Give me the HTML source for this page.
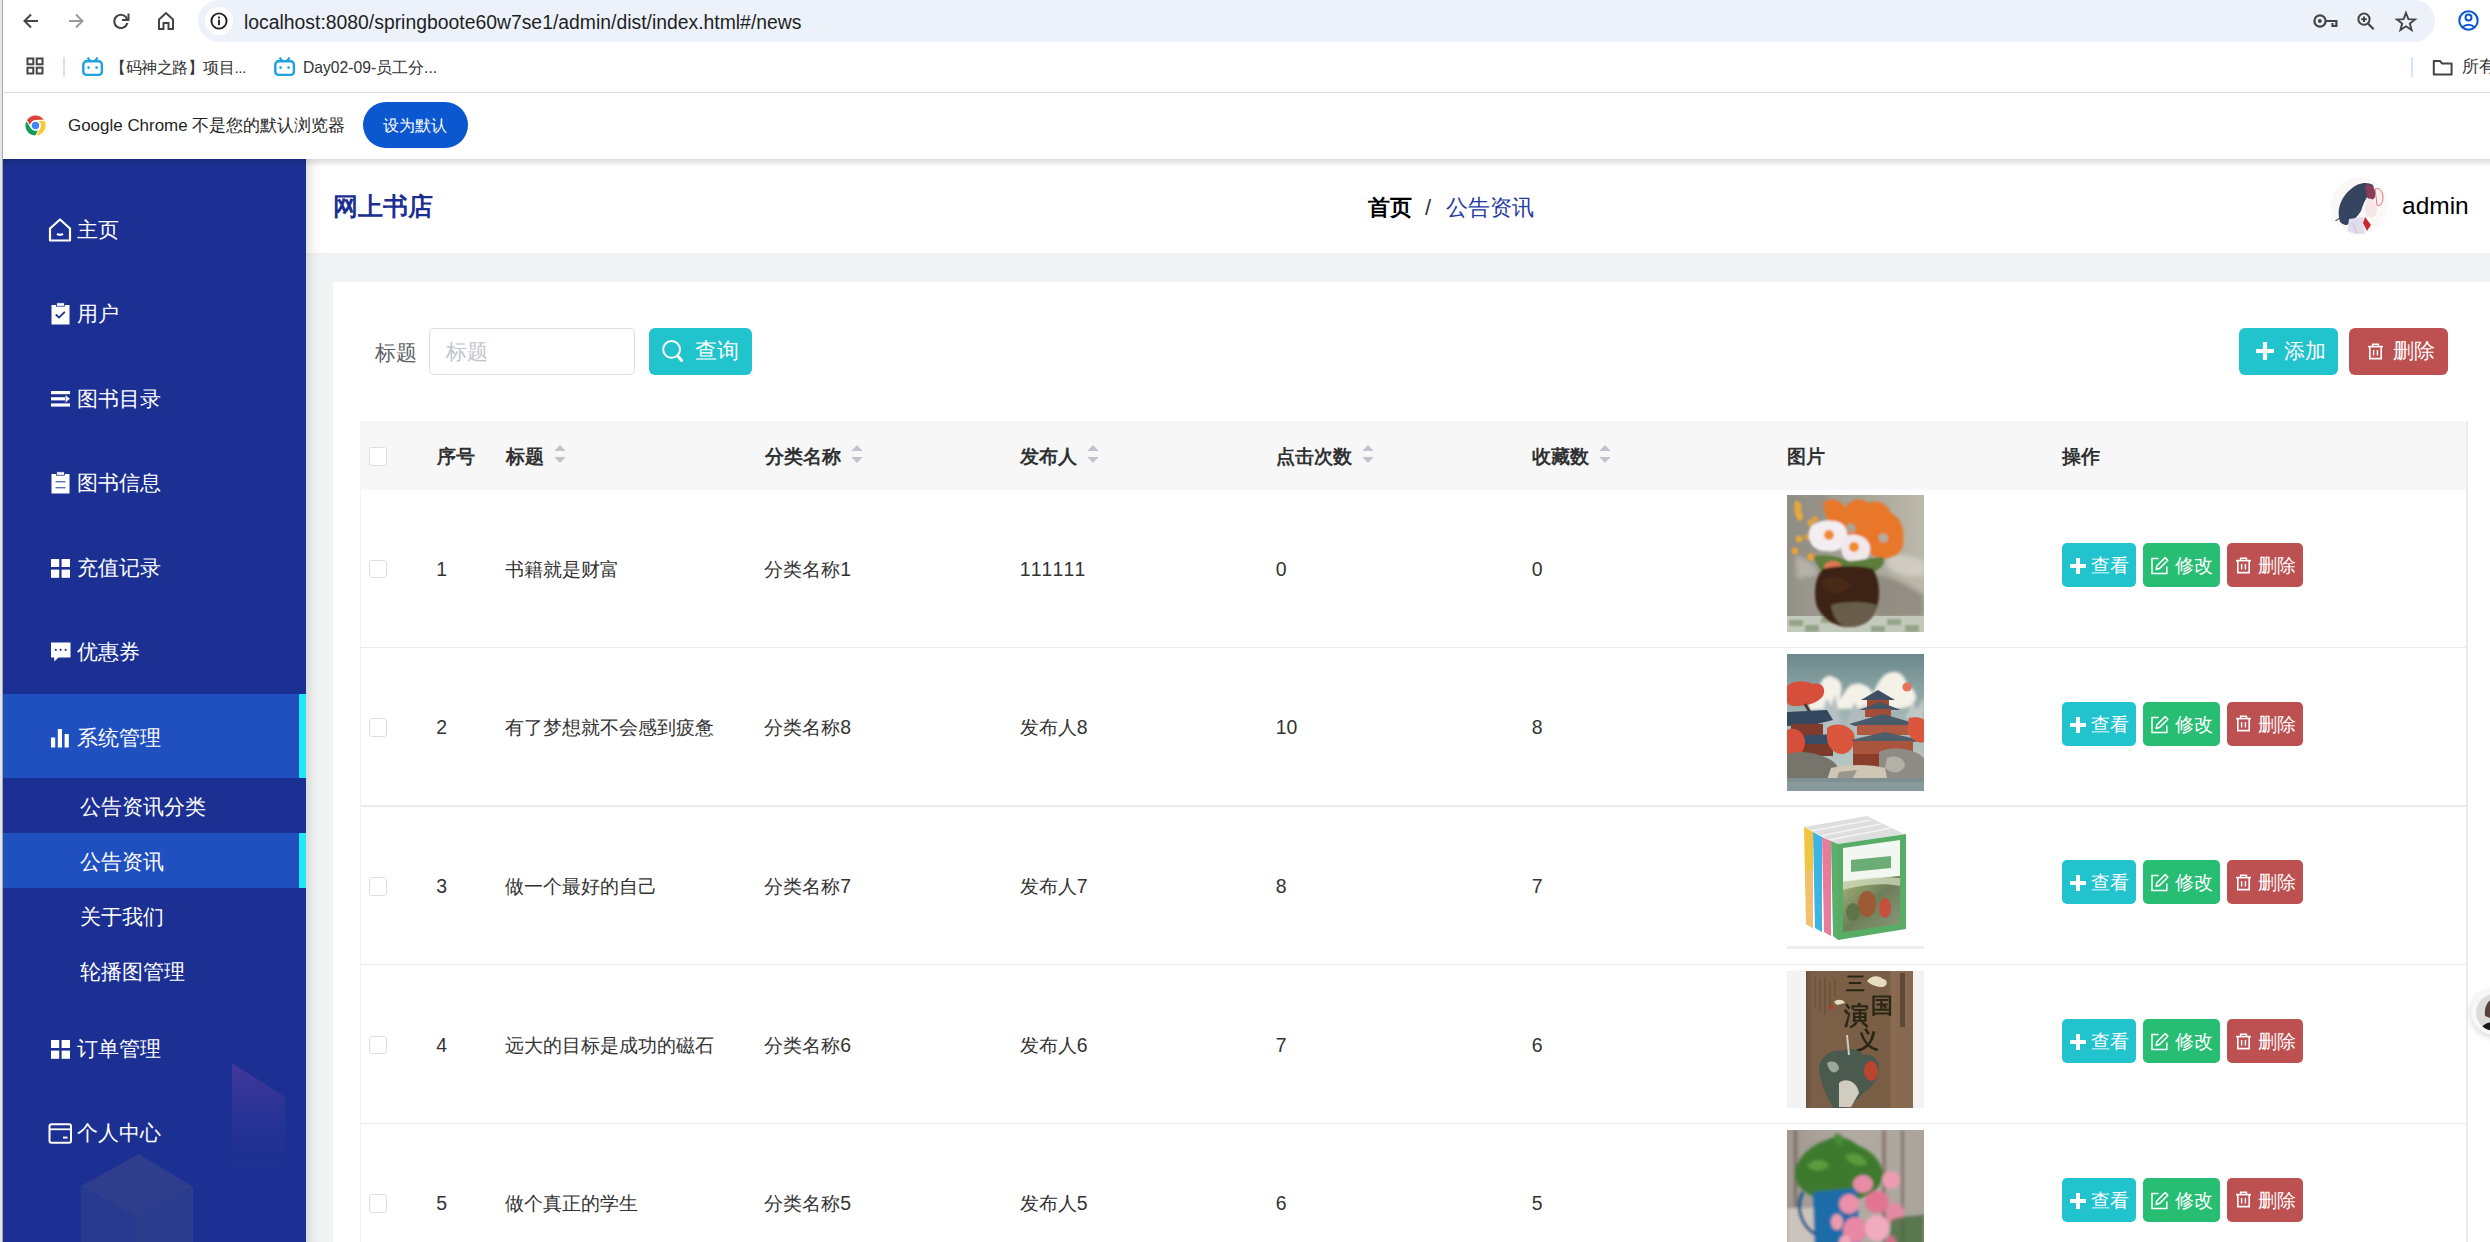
<!DOCTYPE html>
<html><head><meta charset="utf-8"><title>网上书店</title>
<style>
*{margin:0;padding:0;box-sizing:border-box}
html,body{width:2490px;height:1242px;overflow:hidden;background:#fff;font-family:"Liberation Sans",sans-serif}
.t{position:absolute;white-space:nowrap;line-height:1}
#chrome{position:absolute;left:0;top:0;width:2490px;height:159px;background:#fff}
#sidebar{position:absolute;left:3px;top:159px;width:303px;height:1083px;background:#1b3092;overflow:hidden}
#header{position:absolute;left:306px;top:159px;width:2184px;height:94px;background:#fff}
#content{position:absolute;left:306px;top:253px;width:2184px;height:989px;background:#f1f4f5}
.btn{position:absolute;height:44px;border-radius:5px}
.img{position:absolute;width:137px;height:137px;overflow:hidden}
#card{position:absolute;left:27px;top:29px;width:2157px;height:960px;background:#fff}
</style></head><body>
<div id="chrome">
<div style="position:absolute;left:0;top:0;width:2px;height:1242px;background:#e6e6e6"></div>
<div style="position:absolute;left:2px;top:0;width:1px;height:1242px;background:#a8a8a8"></div>
<svg style="position:absolute;left:20px;top:10px" width="22" height="22" viewBox="0 0 22 22"><path d="M18 11H5M11 4.5L4.5 11L11 17.5" stroke="#444" stroke-width="2" fill="none"/></svg>
<svg style="position:absolute;left:65px;top:10px" width="22" height="22" viewBox="0 0 22 22"><path d="M4 11H17M11 4.5L17.5 11L11 17.5" stroke="#9a9a9a" stroke-width="2" fill="none"/></svg>
<svg style="position:absolute;left:110px;top:10px" width="22" height="22" viewBox="0 0 22 22"><path d="M17.2 9.5A6.6 6.6 0 1 0 17.3 13" stroke="#444" stroke-width="2" fill="none"/><path d="M18.5 3.5V10H12" stroke="#444" stroke-width="2" fill="none"/></svg>
<svg style="position:absolute;left:155px;top:10px" width="22" height="22" viewBox="0 0 22 22"><path d="M4 19V9.5L11 3L18 9.5V19H13.5V13H8.5V19Z" stroke="#444" stroke-width="2" fill="none" stroke-linejoin="miter"/></svg>
<div style="position:absolute;left:198px;top:0;width:2237px;height:42px;border-radius:21px;background:#edf2fa"></div>
<div style="position:absolute;left:205px;top:7px;width:28px;height:28px;border-radius:50%;background:#fff"></div>
<svg style="position:absolute;left:209px;top:11px" width="20" height="20" viewBox="0 0 20 20"><circle cx="10" cy="10" r="7.6" stroke="#222" stroke-width="1.9" fill="none"/><rect x="9.05" y="8.6" width="1.9" height="5.6" fill="#222"/><rect x="9.05" y="5.6" width="1.9" height="1.9" fill="#222"/></svg>
<div class="t" style="left:244px;top:12.81px;font-size:19.38px;color:#1f1f1f;font-weight:normal;letter-spacing:0px">localhost:8080/springboote60w7se1/admin/dist/index.html#/news</div>
<svg style="position:absolute;left:2312px;top:12px" width="28" height="18" viewBox="0 0 28 18"><circle cx="8" cy="9" r="5.6" stroke="#444" stroke-width="2.2" fill="none"/><circle cx="7.8" cy="9" r="2" fill="#444"/><path d="M13.6 9H24.4V14H20.5V11" stroke="#444" stroke-width="2.2" fill="none"/></svg>
<svg style="position:absolute;left:2355px;top:11px" width="22" height="22" viewBox="0 0 22 22"><circle cx="9" cy="8.2" r="5.6" stroke="#444" stroke-width="2" fill="none"/><path d="M13 12.4L18.6 18.2" stroke="#444" stroke-width="2.2"/><path d="M9 5.4V11M6.2 8.2H11.8" stroke="#444" stroke-width="2"/></svg>
<svg style="position:absolute;left:2394px;top:10px" width="24" height="22" viewBox="0 0 24 22"><path d="M12 3L14.4 9.2L21 9.5L15.8 13.6L17.6 20L12 16.3L6.4 20L8.2 13.6L3 9.5L9.6 9.2Z" stroke="#444" stroke-width="1.9" fill="none" stroke-linejoin="miter"/></svg>
<svg style="position:absolute;left:2456px;top:8px" width="25" height="25" viewBox="0 0 25 25"><circle cx="12.5" cy="12.5" r="9.2" stroke="#0b57d0" stroke-width="2.1" fill="none"/><circle cx="12.5" cy="9.6" r="3" stroke="#0b57d0" stroke-width="2" fill="none"/><path d="M6.2 19.2Q12.5 14.4 18.8 19.2" stroke="#0b57d0" stroke-width="2" fill="none"/></svg>
<svg style="position:absolute;left:26px;top:57px" width="20" height="20" viewBox="0 0 20 20"><g stroke="#444" stroke-width="2" fill="none"><rect x="1.5" y="1.5" width="5.8" height="5.8"/><rect x="10.7" y="1.5" width="5.8" height="5.8"/><rect x="1.5" y="10.7" width="5.8" height="5.8"/><rect x="10.7" y="10.7" width="5.8" height="5.8"/></g></svg>
<div style="position:absolute;left:63px;top:57px;width:2px;height:20px;background:#d3e3fd;border-radius:1px"></div>
<svg style="position:absolute;left:82px;top:57px" width="22" height="20" viewBox="0 0 22 20"><rect x="1.3" y="4.3" width="18.6" height="13.6" rx="3.2" stroke="#1da1e0" stroke-width="2.4" fill="none"/><path d="M5.6 0.6L8.2 4M15.6 0.6L13 4" stroke="#1da1e0" stroke-width="2.2"/><circle cx="6.6" cy="10.6" r="1.3" fill="#1da1e0"/><circle cx="14.6" cy="10.6" r="1.3" fill="#1da1e0"/></svg>
<div class="t" style="left:110px;top:60.25px;font-size:15.5px;color:#333;font-weight:normal;letter-spacing:-0.45px">【码神之路】项目...</div>
<svg style="position:absolute;left:274px;top:57px" width="22" height="20" viewBox="0 0 22 20"><rect x="1.3" y="4.3" width="18.6" height="13.6" rx="3.2" stroke="#1da1e0" stroke-width="2.4" fill="none"/><path d="M5.6 0.6L8.2 4M15.6 0.6L13 4" stroke="#1da1e0" stroke-width="2.2"/><circle cx="6.6" cy="10.6" r="1.3" fill="#1da1e0"/><circle cx="14.6" cy="10.6" r="1.3" fill="#1da1e0"/></svg>
<div class="t" style="left:303px;top:60.17px;font-size:15.66px;color:#333;font-weight:normal;">Day02-09-员工分...</div>
<div style="position:absolute;left:2411px;top:57px;width:2px;height:20px;background:#d3e3fd;border-radius:1px"></div>
<svg style="position:absolute;left:2432px;top:59px" width="23" height="18" viewBox="0 0 23 18"><path d="M1.8 2V15.6H19.6V4.6H10.2L8 2Z" stroke="#444" stroke-width="2" fill="none" stroke-linejoin="round"/></svg>
<div class="t" style="left:2462px;top:59.20px;font-size:16.6px;color:#333;font-weight:normal;">所有</div>
<div style="position:absolute;left:3px;top:92px;width:2487px;height:1px;background:#dadce0"></div>
<svg style="position:absolute;left:24px;top:114px" width="23" height="23" viewBox="-11.5 -11.5 23 23">
<g stroke="#fff" stroke-width="0.9" stroke-linejoin="round">
<path d="M9.093,-5.250 A10.5 10.5 0 0 0 -9.093,-5.250 L-4.330,2.500 A5.0 5.0 0 0 1 0,-5.000 Z" fill="#db4437"/>
<path d="M9.093,-5.250 A10.5 10.5 0 0 0 -9.093,-5.250 L-4.330,2.500 A5.0 5.0 0 0 1 0,-5.000 Z" fill="#fcc934" transform="rotate(120)"/>
<path d="M9.093,-5.250 A10.5 10.5 0 0 0 -9.093,-5.250 L-4.330,2.500 A5.0 5.0 0 0 1 0,-5.000 Z" fill="#0f9d58" transform="rotate(240)"/>
</g>
<circle r="3.7" fill="#4285f4"/></svg>
<div class="t" style="left:68px;top:118.02px;font-size:16.97px;color:#1f1f1f;font-weight:normal;">Google Chrome 不是您的默认浏览器</div>
<div style="position:absolute;left:363px;top:102px;width:105px;height:46px;border-radius:23px;background:#0b57d0"></div>
<div class="t" style="left:383px;top:116.90px;font-size:16.2px;color:#fff;font-weight:normal;">设为默认</div>
</div>
<div id="sidebar">
<svg style="position:absolute;left:0;top:0" width="303" height="1083" viewBox="0 0 303 1083">
<defs><linearGradient id="pg" x1="0" y1="0" x2="0" y2="1"><stop offset="0" stop-color="#4a3a9c" stop-opacity="0.85"/><stop offset="1" stop-color="#1b3092" stop-opacity="0"/></linearGradient></defs>
<path d="M229 904L282 938V1031L229 1015Z" fill="url(#pg)"/>
<path d="M136 995L190 1028L132 1058L78 1027Z" fill="#2e3e8d"/>
<path d="M78 1027L132 1058V1083H78Z" fill="#283a8f"/>
<path d="M132 1058L190 1028V1083H132Z" fill="#2c3d8e"/>
</svg>
<div style="position:absolute;left:0;top:535px;width:303px;height:84px;background:#2050c0"></div>
<div style="position:absolute;left:296px;top:535px;width:7px;height:84px;background:#1eeaf6"></div>
<div style="position:absolute;left:0;top:674px;width:303px;height:55px;background:#2050c0"></div>
<div style="position:absolute;left:296px;top:674px;width:7px;height:55px;background:#1eeaf6"></div>
<div style="position:absolute;left:44px;top:57.5px;width:26px;height:26px"><svg width="26" height="26" viewBox="0 0 26 26"><path d="M3 11.5L13 2.5L23 11.5V23.5H3Z" stroke="#fff" stroke-width="2.2" fill="none" stroke-linejoin="round"/><path d="M10 16.8Q13 18.8 16 16.8" stroke="#fff" stroke-width="2" fill="none"/></svg></div>
<div class="t" style="left:74.3px;top:60.85px;font-size:20.5px;color:#fff;font-weight:normal;">主页</div>
<div style="position:absolute;left:44px;top:141.5px;width:26px;height:26px"><svg width="26" height="26" viewBox="0 0 26 26"><rect x="4.5" y="4" width="18" height="19.5" fill="#fff"/><rect x="9.5" y="1.8" width="8" height="3.4" fill="#fff" stroke="#1b3092" stroke-width="0.8"/><path d="M8.8 13.5L12 16.6L17.8 10.8" stroke="#1b3092" stroke-width="1.8" fill="none"/></svg></div>
<div class="t" style="left:74.3px;top:144.85px;font-size:20.5px;color:#fff;font-weight:normal;">用户</div>
<div style="position:absolute;left:44px;top:226.5px;width:26px;height:26px"><svg width="26" height="26" viewBox="0 0 26 26"><rect x="4" y="5" width="19" height="3.2" fill="#fff"/><rect x="4" y="11.2" width="14" height="3.2" fill="#fff"/><path d="M18.5 9.2L23 12.8L18.5 16.4Z" fill="#fff"/><rect x="4" y="17.4" width="19" height="3.2" fill="#fff"/></svg></div>
<div class="t" style="left:74.3px;top:229.85px;font-size:20.5px;color:#fff;font-weight:normal;">图书目录</div>
<div style="position:absolute;left:44px;top:310.5px;width:26px;height:26px"><svg width="26" height="26" viewBox="0 0 26 26"><rect x="4.5" y="4" width="18" height="19.5" fill="#fff"/><rect x="9.5" y="1.8" width="8" height="3.4" fill="#fff" stroke="#1b3092" stroke-width="0.8"/><rect x="8.5" y="11" width="10" height="1.4" fill="#5b6fb8"/><rect x="8.5" y="17" width="10" height="1.4" fill="#5b6fb8"/></svg></div>
<div class="t" style="left:74.3px;top:313.85px;font-size:20.5px;color:#fff;font-weight:normal;">图书信息</div>
<div style="position:absolute;left:44px;top:395.5px;width:26px;height:26px"><svg width="26" height="26" viewBox="0 0 26 26"><rect x="4" y="4" width="8.2" height="8" fill="#fff"/><rect x="14.6" y="4" width="8.4" height="8" fill="#fff"/><rect x="4" y="14.6" width="8.2" height="8.2" fill="#fff"/><rect x="14.6" y="14.6" width="8.4" height="8.2" fill="#fff"/></svg></div>
<div class="t" style="left:74.3px;top:398.85px;font-size:20.5px;color:#fff;font-weight:normal;">充值记录</div>
<div style="position:absolute;left:44px;top:480.0px;width:26px;height:26px"><svg width="26" height="26" viewBox="0 0 26 26"><path d="M4 3.5H23.5V18.5H11.5L7.2 22.6V18.5H4Z" fill="#fff"/><circle cx="8.8" cy="10.8" r="1.1" fill="#1b3092"/><circle cx="13.7" cy="10.8" r="1.1" fill="#1b3092"/><circle cx="18.6" cy="10.8" r="1.1" fill="#1b3092"/></svg></div>
<div class="t" style="left:74.3px;top:483.35px;font-size:20.5px;color:#fff;font-weight:normal;">优惠券</div>
<div style="position:absolute;left:44px;top:565.5px;width:26px;height:26px"><svg width="26" height="26" viewBox="0 0 26 26"><rect x="4" y="12.5" width="4.2" height="10" fill="#fff"/><rect x="10.8" y="4" width="4.2" height="18.5" fill="#fff"/><rect x="17.6" y="9" width="4.2" height="13.5" fill="#fff"/></svg></div>
<div class="t" style="left:74.3px;top:568.85px;font-size:20.5px;color:#fff;font-weight:normal;">系统管理</div>
<div style="position:absolute;left:44px;top:876.5px;width:26px;height:26px"><svg width="26" height="26" viewBox="0 0 26 26"><rect x="4" y="4" width="8.2" height="8" fill="#fff"/><rect x="14.6" y="4" width="8.4" height="8" fill="#fff"/><rect x="4" y="14.6" width="8.2" height="8.2" fill="#fff"/><rect x="14.6" y="14.6" width="8.4" height="8.2" fill="#fff"/></svg></div>
<div class="t" style="left:74.3px;top:879.85px;font-size:20.5px;color:#fff;font-weight:normal;">订单管理</div>
<div style="position:absolute;left:44px;top:961.0px;width:26px;height:26px"><svg width="26" height="26" viewBox="0 0 26 26"><rect x="2.5" y="4.2" width="21.5" height="18.6" rx="2" stroke="#fff" stroke-width="2" fill="none"/><path d="M3 9.3H23.5" stroke="#fff" stroke-width="1.8"/><path d="M16 17.6H20.5" stroke="#fff" stroke-width="2"/></svg></div>
<div class="t" style="left:74.3px;top:964.35px;font-size:20.5px;color:#fff;font-weight:normal;">个人中心</div>
<div class="t" style="left:76.8px;top:637.95px;font-size:20.5px;color:#fff;font-weight:normal;">公告资讯分类</div>
<div class="t" style="left:76.8px;top:692.95px;font-size:20.5px;color:#fff;font-weight:normal;">公告资讯</div>
<div class="t" style="left:76.8px;top:747.95px;font-size:20.5px;color:#fff;font-weight:normal;">关于我们</div>
<div class="t" style="left:76.8px;top:802.95px;font-size:20.5px;color:#fff;font-weight:normal;">轮播图管理</div>
</div>
<div id="header">
<div class="t" style="left:27px;top:35.75px;font-size:24.5px;color:#1b2f93;font-weight:bold;">网上书店</div>
<div class="t" style="left:1062px;top:38.00px;font-size:22px;color:#000;font-weight:bold;">首页</div>
<div class="t" style="left:1119px;top:38.00px;font-size:22px;color:#333;font-weight:normal;">/</div>
<div class="t" style="left:1140px;top:38.00px;font-size:22px;color:#253a9f;font-weight:normal;">公告资讯</div>
<div style="position:absolute;left:2025px;top:18px;width:57px;height:57px;border-radius:50%;overflow:hidden;background:#fdf8f8">
<svg width="57" height="57" viewBox="0 0 57 57"><defs><filter id="avb"><feGaussianBlur stdDeviation="0.6"/></filter></defs>
<g filter="url(#avb)">
<path d="M8 40C6 30 12 18 20 12C26 6 36 4 42 8C44 12 40 14 38 18C34 22 32 28 30 34C26 40 22 44 16 48C12 48 8 46 8 40Z" fill="#34445f"/>
<path d="M14 30C12 36 10 42 4 44" stroke="#3c4660" stroke-width="1.2" fill="none"/>
<path d="M34 8C40 6 46 12 44 20C42 24 38 24 36 20Z" fill="#8a3a58"/>
<path d="M36 22C40 20 46 24 46 32C46 38 42 42 38 40C34 38 32 30 36 22Z" fill="#f6e6e6"/>
<path d="M44 12C48 10 52 14 52 20C52 28 48 30 46 28Z" fill="#f8eeee" stroke="#d05a6a" stroke-width="0.8"/>
<path d="M18 42L32 40L34 57H16Z" fill="#e3dcec"/>
<path d="M34 40L40 48L36 54L32 46Z" fill="#c62a30"/>
<path d="M22 46L26 57" stroke="#c8c0d8" stroke-width="1"/>
</g>
</svg></div>
<div class="t" style="left:2096px;top:34.75px;font-size:24.5px;color:#000;font-weight:normal;">admin</div>
</div>
<div id="content">
<div id="card">
</div>
</div>
<div id="abs">
<div class="t" style="left:374.5px;top:342.70px;font-size:20.6px;color:#606266;font-weight:normal;">标题</div>
<div style="position:absolute;left:429px;top:328px;width:206px;height:47px;border:1.4px solid #dcdfe6;border-radius:5px;background:#fff"></div>
<div class="t" style="left:446px;top:341.70px;font-size:20.6px;color:#c0c4cc;font-weight:normal;">标题</div>
<div style="position:absolute;left:649px;top:328px;width:103px;height:47px;border-radius:6px;background:#21c3cc"></div>
<svg style="position:absolute;left:660px;top:338px" width="25" height="26" viewBox="0 0 25 26"><circle cx="11.6" cy="11.4" r="8.4" stroke="#fff" stroke-width="2" fill="none"/><path d="M17.4 17.6L21.6 22.4" stroke="#fff" stroke-width="3" stroke-linecap="round"/></svg>
<div class="t" style="left:695px;top:340.75px;font-size:21.5px;color:#fff;font-weight:normal;">查询</div>
<div style="position:absolute;left:2239px;top:328px;width:99px;height:47px;border-radius:6px;background:#21c3cc"></div>
<svg style="position:absolute;left:2256px;top:342px" width="18" height="18" viewBox="0 0 18 18"><path d="M9 0V18M0 9H18" stroke="#fff" stroke-width="4.2"/></svg>
<div class="t" style="left:2283.5px;top:340.70px;font-size:20.6px;color:#fff;font-weight:normal;">添加</div>
<div style="position:absolute;left:2349px;top:328px;width:99px;height:47px;border-radius:6px;background:#bd5152"></div>
<svg style="position:absolute;left:2366.5px;top:342.5px" width="17" height="17" viewBox="0 0 17 17"><path d="M1 3.6H16" stroke="#fff" stroke-width="1.6"/><path d="M5.6 3.4V1.2H11.4V3.4" stroke="#fff" stroke-width="1.5" fill="none"/><path d="M2.8 4V15.6H14.2V4" stroke="#fff" stroke-width="1.6" fill="none"/><path d="M6.6 7V12.6M10.4 7V12.6" stroke="#fff" stroke-width="1.4"/></svg>
<div class="t" style="left:2393px;top:340.70px;font-size:20.6px;color:#fff;font-weight:normal;">删除</div>
<div style="position:absolute;left:360px;top:421px;width:2106px;height:69px;background:#f7f7f7"></div>
<div style="position:absolute;left:2466px;top:421px;width:2px;height:821px;background:#e7ebf4"></div>
<div style="position:absolute;left:360px;top:490px;width:1px;height:752px;background:#f3f3f3"></div>
<div style="position:absolute;left:368.5px;top:447.00px;width:18.5px;height:18.5px;border:1.3px solid #dcdfe6;border-radius:3px;background:#fff"></div>
<div class="t" style="left:437px;top:446.90px;font-size:19.2px;color:#303133;font-weight:bold;">序号</div>
<div class="t" style="left:505.5px;top:446.90px;font-size:19.2px;color:#303133;font-weight:bold;">标题</div>
<svg style="position:absolute;left:554.3px;top:445px" width="12" height="18" viewBox="0 0 12 18"><path d="M6 0L11.8 6H0.2Z M6 18L11.8 12H0.2Z" fill="#c0c4cc"/></svg>
<div class="t" style="left:764.5px;top:446.90px;font-size:19.2px;color:#303133;font-weight:bold;">分类名称</div>
<svg style="position:absolute;left:851px;top:445px" width="12" height="18" viewBox="0 0 12 18"><path d="M6 0L11.8 6H0.2Z M6 18L11.8 12H0.2Z" fill="#c0c4cc"/></svg>
<div class="t" style="left:1020px;top:446.90px;font-size:19.2px;color:#303133;font-weight:bold;">发布人</div>
<svg style="position:absolute;left:1087px;top:445px" width="12" height="18" viewBox="0 0 12 18"><path d="M6 0L11.8 6H0.2Z M6 18L11.8 12H0.2Z" fill="#c0c4cc"/></svg>
<div class="t" style="left:1276px;top:446.90px;font-size:19.2px;color:#303133;font-weight:bold;">点击次数</div>
<svg style="position:absolute;left:1362px;top:445px" width="12" height="18" viewBox="0 0 12 18"><path d="M6 0L11.8 6H0.2Z M6 18L11.8 12H0.2Z" fill="#c0c4cc"/></svg>
<div class="t" style="left:1532px;top:446.90px;font-size:19.2px;color:#303133;font-weight:bold;">收藏数</div>
<svg style="position:absolute;left:1599px;top:445px" width="12" height="18" viewBox="0 0 12 18"><path d="M6 0L11.8 6H0.2Z M6 18L11.8 12H0.2Z" fill="#c0c4cc"/></svg>
<div class="t" style="left:1787px;top:446.90px;font-size:19.2px;color:#303133;font-weight:bold;">图片</div>
<div class="t" style="left:2062px;top:446.90px;font-size:19.2px;color:#303133;font-weight:bold;">操作</div>
<div style="position:absolute;left:361px;top:646.67px;width:2105px;height:1.3px;background:#ebebeb"></div>
<div style="position:absolute;left:368.5px;top:559.74px;width:18.5px;height:18.5px;border:1.3px solid #dcdfe6;border-radius:3px;background:#fff"></div>
<div class="t" style="left:436.2px;top:559.51px;font-size:19.45px;color:#333;font-weight:normal;">1</div>
<div class="t" style="left:505.2px;top:559.51px;font-size:19.45px;color:#333;font-weight:normal;">书籍就是财富</div>
<div class="t" style="left:764.2px;top:559.51px;font-size:19.45px;color:#333;font-weight:normal;">分类名称1</div>
<div class="t" style="left:1019.7px;top:559.51px;font-size:19.45px;color:#333;font-weight:normal;letter-spacing:1.6px">111111</div>
<div class="t" style="left:1275.7px;top:559.51px;font-size:19.45px;color:#333;font-weight:normal;">0</div>
<div class="t" style="left:1531.7px;top:559.51px;font-size:19.45px;color:#333;font-weight:normal;">0</div>
<div class="img" style="left:1787px;top:495.00px"><svg width="137" height="137" viewBox="0 0 137 137">
<defs>
<linearGradient id="i1bg" x1="0" y1="0" x2="1" y2="0"><stop offset="0" stop-color="#94918a"/><stop offset="0.6" stop-color="#a9a69a"/><stop offset="1" stop-color="#bdb9ad"/></linearGradient>
<filter id="i1b" x="-10%" y="-10%" width="120%" height="120%"><feGaussianBlur stdDeviation="2"/></filter>
<filter id="i1c"><feGaussianBlur stdDeviation="0.9"/></filter>
</defs>
<rect width="137" height="137" fill="url(#i1bg)"/>
<g filter="url(#i1b)">
<path d="M80 80C100 78 120 90 137 100V122H90Z" fill="#8a867a" opacity="0.8"/>
<path d="M0 0H40L30 60L0 70Z" fill="#8c8a82" opacity="0.5"/>
<path d="M100 60C115 58 130 62 137 66V80C125 84 110 80 100 72Z" fill="#d8d6cc" opacity="0.7"/>
<path d="M8 60C20 64 30 70 30 80L10 84Z" fill="#cfcdc4" opacity="0.5"/>
</g>
<rect x="0" y="121" width="137" height="16" fill="#c4cabb"/>
<g fill="#8d9e80" opacity="0.85" filter="url(#i1c)"><rect x="2" y="125" width="14" height="6"/><rect x="34" y="122" width="14" height="6"/><rect x="18" y="130" width="14" height="7"/><rect x="100" y="124" width="14" height="6"/><rect x="118" y="130" width="14" height="7"/><rect x="84" y="131" width="14" height="6"/></g>
<g filter="url(#i1c)">
<path d="M36 8C42 2 52 4 58 12C64 4 74 2 82 8C90 4 100 8 104 18C112 22 118 32 116 44C118 52 112 60 104 62C96 66 86 62 80 56C72 52 62 50 56 42C46 36 38 26 36 8Z" fill="#e8772c"/>
<path d="M60 30C64 26 70 30 68 36C64 40 58 36 60 30Z" fill="#a9a59a"/><path d="M92 40C96 36 104 40 100 46C96 50 90 46 92 40Z" fill="#b2ae9f"/>
<path d="M8 6C12 4 16 10 14 16C18 22 16 26 12 26C8 22 6 14 8 6Z" fill="#e6a73c"/>
<circle cx="24" cy="28" r="3.6" fill="#e3a43e"/><circle cx="12" cy="44" r="3.4" fill="#e6a63a"/><circle cx="20" cy="42" r="3" fill="#dc9c35"/><circle cx="8" cy="56" r="3.4" fill="#e8a23a"/><circle cx="24" cy="62" r="3.8" fill="#e8a23a"/><circle cx="28" cy="24" r="3" fill="#e0a03a"/>
<path d="M22 36C24 28 36 24 46 26C56 26 62 34 60 44C58 54 48 58 38 56C28 56 20 48 22 36Z" fill="#f3eeef"/>
<path d="M54 52C52 42 60 38 70 40C80 42 86 50 82 60C78 68 68 70 60 66C56 62 54 58 54 52Z" fill="#f1e8ec"/>
<circle cx="42" cy="40" r="5" fill="#ef8a2a"/><circle cx="67" cy="52" r="5" fill="#ee8a2a"/>
<path d="M26 62C36 58 52 62 62 66C72 66 86 62 96 62C100 68 92 76 84 78L62 80L34 76Z" fill="#5c7d3a"/>
<ellipse cx="46" cy="72" rx="9" ry="6" fill="#e07a52"/>
<path d="M36 74C28 82 26 98 30 112C36 124 48 132 62 132C76 132 86 126 90 112C94 98 92 84 86 74C74 70 48 70 36 74Z" fill="#3d2414"/>
<path d="M34 86C44 80 58 82 64 90C58 98 46 100 38 96Z" fill="#4e2c16" opacity="0.8"/>
<path d="M44 110C56 106 78 106 90 110C88 122 78 132 64 132C52 132 46 124 44 110Z" fill="#6e6656" opacity="0.85"/>

</g>

</svg></div>
<div class="btn" style="left:2062px;top:542.84px;width:74px;background:#21c3cc"></div>
<svg style="position:absolute;left:2069.5px;top:558.04px" width="16" height="16" viewBox="0 0 16 16"><path d="M8 0V16M0 8H16" stroke="#fff" stroke-width="4"/></svg>
<div class="t" style="left:2091px;top:555.84px;font-size:19.2px;color:#fff;font-weight:normal;">查看</div>
<div class="btn" style="left:2143px;top:542.84px;width:77px;background:#27be73"></div>
<svg style="position:absolute;left:2150px;top:556.04px" width="20" height="19" viewBox="0 0 20 19"><path d="M8.6 2.4H2V17.4H16.8V10.6" stroke="#fff" stroke-width="1.5" fill="none"/><path d="M6.2 13.4L6.8 10L15.2 1.6L17.8 4.2L9.4 12.6Z" stroke="#fff" stroke-width="1.5" fill="none" stroke-linejoin="round"/></svg>
<div class="t" style="left:2174.5px;top:555.84px;font-size:19.2px;color:#fff;font-weight:normal;">修改</div>
<div class="btn" style="left:2227px;top:542.84px;width:76px;background:#bd5152"></div>
<svg style="position:absolute;left:2234.5px;top:556.63px" width="17" height="17" viewBox="0 0 17 17"><path d="M1 3.6H16" stroke="#fff" stroke-width="1.6"/><path d="M5.6 3.4V1.2H11.4V3.4" stroke="#fff" stroke-width="1.5" fill="none"/><path d="M2.8 4V15.6H14.2V4" stroke="#fff" stroke-width="1.6" fill="none"/><path d="M6.6 7V12.6M10.4 7V12.6" stroke="#fff" stroke-width="1.4"/></svg>
<div class="t" style="left:2257.5px;top:555.84px;font-size:19.2px;color:#fff;font-weight:normal;">删除</div>
<div style="position:absolute;left:361px;top:805.34px;width:2105px;height:1.3px;background:#ebebeb"></div>
<div style="position:absolute;left:368.5px;top:718.40px;width:18.5px;height:18.5px;border:1.3px solid #dcdfe6;border-radius:3px;background:#fff"></div>
<div class="t" style="left:436.2px;top:718.18px;font-size:19.45px;color:#333;font-weight:normal;">2</div>
<div class="t" style="left:505.2px;top:718.18px;font-size:19.45px;color:#333;font-weight:normal;">有了梦想就不会感到疲惫</div>
<div class="t" style="left:764.2px;top:718.18px;font-size:19.45px;color:#333;font-weight:normal;">分类名称8</div>
<div class="t" style="left:1019.7px;top:718.18px;font-size:19.45px;color:#333;font-weight:normal;">发布人8</div>
<div class="t" style="left:1275.7px;top:718.18px;font-size:19.45px;color:#333;font-weight:normal;">10</div>
<div class="t" style="left:1531.7px;top:718.18px;font-size:19.45px;color:#333;font-weight:normal;">8</div>
<div class="img" style="left:1787px;top:653.67px"><svg width="137" height="137" viewBox="0 0 137 137">
<defs>
<linearGradient id="i2s" x1="0" y1="0" x2="0" y2="1"><stop offset="0" stop-color="#6c898d"/><stop offset="0.45" stop-color="#a2b5b3"/><stop offset="1" stop-color="#c5cfcb"/></linearGradient>
<filter id="i2b" x="-10%" y="-10%" width="120%" height="120%"><feGaussianBlur stdDeviation="1.6"/></filter>
<filter id="i2c"><feGaussianBlur stdDeviation="0.7"/></filter>
</defs>
<rect width="137" height="137" fill="url(#i2s)"/>
<g filter="url(#i2b)">
<path d="M22 52C18 44 24 36 32 38C32 26 40 18 48 24C56 26 56 38 52 46C58 40 60 30 68 30C76 28 84 34 86 40C90 30 96 18 106 18C114 16 120 26 120 32C128 34 132 44 126 50C120 56 100 56 86 54L22 56Z" fill="#f4f1e8"/>
<path d="M30 80L36 56L40 44L44 52L48 40L52 60L56 80Z" fill="#b4c0c2"/>
<path d="M58 80L64 56L68 48L72 58L78 50L80 80Z" fill="#b0bcbe"/>
<path d="M118 64L126 48L130 56L137 44V70Z" fill="#c0c8c8"/>
</g>
<g filter="url(#i2c)">
<circle cx="120" cy="33" r="4.6" fill="#e8735c"/>
<path d="M0 32C6 26 18 26 26 30C34 28 40 34 36 42C30 50 18 52 8 52C4 52 0 50 0 48Z" fill="#d6503a"/>
<path d="M18 50L24 60" stroke="#4a3a30" stroke-width="3"/>
<path d="M0 58L40 56L46 66L30 70L0 72Z" fill="#35475f"/>
<rect x="4" y="70" width="32" height="12" fill="#7e3a2e"/>
<path d="M4 82L50 80L52 90L8 92Z" fill="#3a4d66"/>
<rect x="10" y="90" width="36" height="12" fill="#7a3a2c"/>
<path d="M0 76C8 72 18 78 18 88C18 98 10 106 0 108Z" fill="#d5503a"/>
<path d="M40 74C48 68 60 70 66 78C70 86 66 98 56 100C46 100 40 92 40 84Z" fill="#d9573c"/>
<path d="M74 46L91 36L108 46Z" fill="#3e4f60"/>
<rect x="80" y="46" width="22" height="8" fill="#9a4a34"/>
<path d="M72 56L93 48L114 56Z" fill="#445466"/>
<rect x="78" y="55" width="26" height="8" fill="#a24e38"/>
<path d="M62 70L96 60L130 70L124 72H68Z" fill="#4a5a6a"/>
<rect x="70" y="71" width="52" height="10" fill="#b05a42"/>
<path d="M64 86L98 78L134 86L128 88H70Z" fill="#505e6a"/>
<rect x="66" y="87" width="60" height="14" fill="#a9553e"/>
<rect x="66" y="100" width="32" height="13" fill="#8a3e2c"/>
<path d="M122 64C128 62 137 64 137 66V88C130 90 122 84 120 76Z" fill="#d9553a"/>
<path d="M0 100C12 96 28 98 40 104C50 108 54 116 52 126H0Z" fill="#76746c"/>
<path d="M92 98C104 92 122 94 132 100L137 104V124H92Z" fill="#8e8c84"/>
<path d="M100 104C108 100 118 104 118 112C114 120 104 120 98 114Z" fill="#b4b0a6"/>
<path d="M44 114C60 110 84 110 98 114L100 124L40 126Z" fill="#cfc6b6"/><path d="M52 118L70 116L66 124L50 124Z" fill="#9a968c"/>
</g>
<rect x="0" y="124" width="137" height="13" fill="#889a9c"/>
<path d="M0 124H137V128H0Z" fill="#7a8a8c" opacity="0.6"/>
</svg></div>
<div class="btn" style="left:2062px;top:701.50px;width:74px;background:#21c3cc"></div>
<svg style="position:absolute;left:2069.5px;top:716.71px" width="16" height="16" viewBox="0 0 16 16"><path d="M8 0V16M0 8H16" stroke="#fff" stroke-width="4"/></svg>
<div class="t" style="left:2091px;top:714.50px;font-size:19.2px;color:#fff;font-weight:normal;">查看</div>
<div class="btn" style="left:2143px;top:701.50px;width:77px;background:#27be73"></div>
<svg style="position:absolute;left:2150px;top:714.71px" width="20" height="19" viewBox="0 0 20 19"><path d="M8.6 2.4H2V17.4H16.8V10.6" stroke="#fff" stroke-width="1.5" fill="none"/><path d="M6.2 13.4L6.8 10L15.2 1.6L17.8 4.2L9.4 12.6Z" stroke="#fff" stroke-width="1.5" fill="none" stroke-linejoin="round"/></svg>
<div class="t" style="left:2174.5px;top:714.50px;font-size:19.2px;color:#fff;font-weight:normal;">修改</div>
<div class="btn" style="left:2227px;top:701.50px;width:76px;background:#bd5152"></div>
<svg style="position:absolute;left:2234.5px;top:715.30px" width="17" height="17" viewBox="0 0 17 17"><path d="M1 3.6H16" stroke="#fff" stroke-width="1.6"/><path d="M5.6 3.4V1.2H11.4V3.4" stroke="#fff" stroke-width="1.5" fill="none"/><path d="M2.8 4V15.6H14.2V4" stroke="#fff" stroke-width="1.6" fill="none"/><path d="M6.6 7V12.6M10.4 7V12.6" stroke="#fff" stroke-width="1.4"/></svg>
<div class="t" style="left:2257.5px;top:714.50px;font-size:19.2px;color:#fff;font-weight:normal;">删除</div>
<div style="position:absolute;left:361px;top:964.01px;width:2105px;height:1.3px;background:#ebebeb"></div>
<div style="position:absolute;left:368.5px;top:877.07px;width:18.5px;height:18.5px;border:1.3px solid #dcdfe6;border-radius:3px;background:#fff"></div>
<div class="t" style="left:436.2px;top:876.85px;font-size:19.45px;color:#333;font-weight:normal;">3</div>
<div class="t" style="left:505.2px;top:876.85px;font-size:19.45px;color:#333;font-weight:normal;">做一个最好的自己</div>
<div class="t" style="left:764.2px;top:876.85px;font-size:19.45px;color:#333;font-weight:normal;">分类名称7</div>
<div class="t" style="left:1019.7px;top:876.85px;font-size:19.45px;color:#333;font-weight:normal;">发布人7</div>
<div class="t" style="left:1275.7px;top:876.85px;font-size:19.45px;color:#333;font-weight:normal;">8</div>
<div class="t" style="left:1531.7px;top:876.85px;font-size:19.45px;color:#333;font-weight:normal;">7</div>
<div class="img" style="left:1787px;top:812.34px"><svg width="137" height="137" viewBox="0 0 137 137">
<defs><filter id="i3b"><feGaussianBlur stdDeviation="0.6"/></filter>
<linearGradient id="i3i" x1="0" y1="0" x2="1" y2="1"><stop offset="0" stop-color="#a9b27a"/><stop offset="0.5" stop-color="#6d7e58"/><stop offset="1" stop-color="#8a9a7a"/></linearGradient></defs>
<rect width="137" height="137" fill="#fff"/>
<g filter="url(#i3b)">
<path d="M17 15L80 4L117 22L51 32Z" fill="#dedede"/>
<path d="M24 19L84 8M33 24L94 12M42 28L104 16" stroke="#f4f4f4" stroke-width="1.6"/>
<path d="M17 15L26 20V116L19 112Z" fill="#f3c43c"/>
<path d="M19 60L26 56V116L19 112Z" fill="#f2c06e"/>
<path d="M26 20L35 25V120L28 116Z" fill="#3cb4e4"/>
<path d="M35 25L44 29V124L37 120Z" fill="#e67c9a"/>
<path d="M44 29L51 32V128L46 124Z" fill="#5ab06a"/>
<path d="M51 32L119 22V117L51 128Z" fill="#59ad66"/>
<path d="M56 36L113 28V64L56 70Z" fill="#f3f7f1"/>
<path d="M64 48L104 44V56L64 60Z" fill="#4a9a58" opacity="0.8"/>
<path d="M56 70L113 64V112L56 120Z" fill="url(#i3i)"/>
<ellipse cx="80" cy="92" rx="9" ry="13" fill="#9c5a36"/>
<ellipse cx="98" cy="96" rx="6" ry="10" fill="#c6503e"/>
<ellipse cx="66" cy="100" rx="7" ry="9" fill="#5d7648"/>
<path d="M56 70C70 66 92 64 113 66V74C92 70 72 74 56 78Z" fill="#d9e4c4" opacity="0.7"/>
</g>
<rect x="0" y="134" width="137" height="3" fill="#efefef"/>
</svg></div>
<div class="btn" style="left:2062px;top:860.17px;width:74px;background:#21c3cc"></div>
<svg style="position:absolute;left:2069.5px;top:875.38px" width="16" height="16" viewBox="0 0 16 16"><path d="M8 0V16M0 8H16" stroke="#fff" stroke-width="4"/></svg>
<div class="t" style="left:2091px;top:873.17px;font-size:19.2px;color:#fff;font-weight:normal;">查看</div>
<div class="btn" style="left:2143px;top:860.17px;width:77px;background:#27be73"></div>
<svg style="position:absolute;left:2150px;top:873.38px" width="20" height="19" viewBox="0 0 20 19"><path d="M8.6 2.4H2V17.4H16.8V10.6" stroke="#fff" stroke-width="1.5" fill="none"/><path d="M6.2 13.4L6.8 10L15.2 1.6L17.8 4.2L9.4 12.6Z" stroke="#fff" stroke-width="1.5" fill="none" stroke-linejoin="round"/></svg>
<div class="t" style="left:2174.5px;top:873.17px;font-size:19.2px;color:#fff;font-weight:normal;">修改</div>
<div class="btn" style="left:2227px;top:860.17px;width:76px;background:#bd5152"></div>
<svg style="position:absolute;left:2234.5px;top:873.97px" width="17" height="17" viewBox="0 0 17 17"><path d="M1 3.6H16" stroke="#fff" stroke-width="1.6"/><path d="M5.6 3.4V1.2H11.4V3.4" stroke="#fff" stroke-width="1.5" fill="none"/><path d="M2.8 4V15.6H14.2V4" stroke="#fff" stroke-width="1.6" fill="none"/><path d="M6.6 7V12.6M10.4 7V12.6" stroke="#fff" stroke-width="1.4"/></svg>
<div class="t" style="left:2257.5px;top:873.17px;font-size:19.2px;color:#fff;font-weight:normal;">删除</div>
<div style="position:absolute;left:361px;top:1122.68px;width:2105px;height:1.3px;background:#ebebeb"></div>
<div style="position:absolute;left:368.5px;top:1035.74px;width:18.5px;height:18.5px;border:1.3px solid #dcdfe6;border-radius:3px;background:#fff"></div>
<div class="t" style="left:436.2px;top:1035.52px;font-size:19.45px;color:#333;font-weight:normal;">4</div>
<div class="t" style="left:505.2px;top:1035.52px;font-size:19.45px;color:#333;font-weight:normal;">远大的目标是成功的磁石</div>
<div class="t" style="left:764.2px;top:1035.52px;font-size:19.45px;color:#333;font-weight:normal;">分类名称6</div>
<div class="t" style="left:1019.7px;top:1035.52px;font-size:19.45px;color:#333;font-weight:normal;">发布人6</div>
<div class="t" style="left:1275.7px;top:1035.52px;font-size:19.45px;color:#333;font-weight:normal;">7</div>
<div class="t" style="left:1531.7px;top:1035.52px;font-size:19.45px;color:#333;font-weight:normal;">6</div>
<div class="img" style="left:1787px;top:971.01px"><svg width="137" height="137" viewBox="0 0 137 137">
<defs><filter id="i4b"><feGaussianBlur stdDeviation="0.7"/></filter>
<linearGradient id="i4c" x1="0" y1="0" x2="1" y2="0"><stop offset="0" stop-color="#6a523e"/><stop offset="0.06" stop-color="#7b5f47"/><stop offset="0.78" stop-color="#7a5d45"/><stop offset="0.8" stop-color="#8a6b50"/><stop offset="1" stop-color="#876850"/></linearGradient></defs>
<rect width="137" height="137" fill="#f3f3f3"/>
<rect x="19" y="0" width="107" height="137" fill="url(#i4c)"/>
<g filter="url(#i4b)">
<g font-family="Liberation Serif" font-weight="bold" fill="#2a2816">
<text x="59" y="19" font-size="19">三</text>
<text x="84" y="42" font-size="22">国</text>
<text x="57" y="53" font-size="25">演</text>
<text x="69" y="77" font-size="23">义</text>
</g>
<path d="M80 10C84 4 92 4 96 8C100 8 102 14 96 16C90 16 84 14 80 10Z" fill="#e6dcc0"/>
<path d="M47 31C50 28 56 28 58 32L50 34Z" fill="#e6dcc0"/>
<path d="M28 6V36M33 8V40M38 6V44M43 10V40M48 8V26" stroke="#5e4834" stroke-width="0.8"/>
<rect x="113" y="2" width="5" height="54" fill="#2f2616" opacity="0.45"/>
<circle cx="44" cy="36" r="2.2" fill="#b23a2a"/>
<path d="M32 96C34 84 46 78 56 80C62 76 72 78 76 84C84 82 92 88 92 96C92 108 84 118 76 122C70 130 62 137 54 137H46C40 126 32 110 32 96Z" fill="#4c5a50"/>
<path d="M40 92C46 88 52 92 52 98C48 104 42 102 40 92Z" fill="#9aa89c"/>
<ellipse cx="84" cy="100" rx="7" ry="10" fill="#b9452e"/>
<path d="M52 112C58 106 70 110 72 122L64 136H52Z" fill="#d0ccc0"/>
<path d="M60 64L62 84" stroke="#cfcabc" stroke-width="2"/>
</g>
</svg></div>
<div class="btn" style="left:2062px;top:1018.85px;width:74px;background:#21c3cc"></div>
<svg style="position:absolute;left:2069.5px;top:1034.05px" width="16" height="16" viewBox="0 0 16 16"><path d="M8 0V16M0 8H16" stroke="#fff" stroke-width="4"/></svg>
<div class="t" style="left:2091px;top:1031.85px;font-size:19.2px;color:#fff;font-weight:normal;">查看</div>
<div class="btn" style="left:2143px;top:1018.85px;width:77px;background:#27be73"></div>
<svg style="position:absolute;left:2150px;top:1032.05px" width="20" height="19" viewBox="0 0 20 19"><path d="M8.6 2.4H2V17.4H16.8V10.6" stroke="#fff" stroke-width="1.5" fill="none"/><path d="M6.2 13.4L6.8 10L15.2 1.6L17.8 4.2L9.4 12.6Z" stroke="#fff" stroke-width="1.5" fill="none" stroke-linejoin="round"/></svg>
<div class="t" style="left:2174.5px;top:1031.85px;font-size:19.2px;color:#fff;font-weight:normal;">修改</div>
<div class="btn" style="left:2227px;top:1018.85px;width:76px;background:#bd5152"></div>
<svg style="position:absolute;left:2234.5px;top:1032.64px" width="17" height="17" viewBox="0 0 17 17"><path d="M1 3.6H16" stroke="#fff" stroke-width="1.6"/><path d="M5.6 3.4V1.2H11.4V3.4" stroke="#fff" stroke-width="1.5" fill="none"/><path d="M2.8 4V15.6H14.2V4" stroke="#fff" stroke-width="1.6" fill="none"/><path d="M6.6 7V12.6M10.4 7V12.6" stroke="#fff" stroke-width="1.4"/></svg>
<div class="t" style="left:2257.5px;top:1031.85px;font-size:19.2px;color:#fff;font-weight:normal;">删除</div>
<div style="position:absolute;left:368.5px;top:1194.41px;width:18.5px;height:18.5px;border:1.3px solid #dcdfe6;border-radius:3px;background:#fff"></div>
<div class="t" style="left:436.2px;top:1194.19px;font-size:19.45px;color:#333;font-weight:normal;">5</div>
<div class="t" style="left:505.2px;top:1194.19px;font-size:19.45px;color:#333;font-weight:normal;">做个真正的学生</div>
<div class="t" style="left:764.2px;top:1194.19px;font-size:19.45px;color:#333;font-weight:normal;">分类名称5</div>
<div class="t" style="left:1019.7px;top:1194.19px;font-size:19.45px;color:#333;font-weight:normal;">发布人5</div>
<div class="t" style="left:1275.7px;top:1194.19px;font-size:19.45px;color:#333;font-weight:normal;">6</div>
<div class="t" style="left:1531.7px;top:1194.19px;font-size:19.45px;color:#333;font-weight:normal;">5</div>
<div class="img" style="left:1787px;top:1129.68px"><svg width="137" height="137" viewBox="0 0 137 137">
<defs><filter id="i5b" x="-10%" y="-10%" width="120%" height="120%"><feGaussianBlur stdDeviation="1.4"/></filter>
<linearGradient id="i5bg" x1="0" y1="0" x2="1" y2="0"><stop offset="0" stop-color="#a09890"/><stop offset="0.5" stop-color="#b2aba4"/><stop offset="1" stop-color="#aba49d"/></linearGradient></defs>
<rect width="137" height="137" fill="url(#i5bg)"/>
<g filter="url(#i5b)">
<rect x="7" y="0" width="3" height="137" fill="#6a5e54" opacity="0.7"/>
<rect x="95" y="0" width="4" height="137" fill="#7e6a58" opacity="0.7"/>
<rect x="114" y="0" width="3" height="137" fill="#6a5e54" opacity="0.6"/>
<rect x="0" y="78" width="28" height="60" fill="#cbc4bc"/>
<path d="M8 42C10 26 26 14 40 10C50 4 62 8 72 16C84 20 96 32 96 46C94 60 80 68 64 70C46 72 28 70 18 62C10 56 8 50 8 42Z" fill="#3c7a2e"/>
<path d="M20 36C26 28 38 28 42 36C36 42 26 42 20 36Z" fill="#5c9c3e"/>
<path d="M58 26C66 20 78 26 80 34C72 38 62 34 58 26Z" fill="#5a9a3c"/>
<path d="M48 4C52 2 58 6 56 16C50 16 46 10 48 4Z" fill="#4a8a36"/>
<path d="M26 62L70 58L74 137H28Z" fill="#1b6ca8"/>
<path d="M16 62C8 76 14 96 28 104" stroke="#1a5a8c" stroke-width="3.4" fill="none"/>
<ellipse cx="76" cy="54" rx="10" ry="9" fill="#e88ca8"/>
<ellipse cx="104" cy="50" rx="9" ry="9" fill="#ec9cb2"/>
<ellipse cx="90" cy="72" rx="12" ry="11" fill="#e27494"/>
<ellipse cx="62" cy="74" rx="10" ry="10" fill="#ea90aa"/>
<ellipse cx="68" cy="100" rx="12" ry="13" fill="#e888a4"/>
<ellipse cx="90" cy="98" rx="12" ry="13" fill="#f1aabe"/>
<ellipse cx="108" cy="84" rx="9" ry="11" fill="#e58aa4"/>
<ellipse cx="50" cy="92" rx="6" ry="8" fill="#ec9cae"/>
<ellipse cx="58" cy="112" rx="6" ry="7" fill="#f0a4b8"/>
<path d="M104 90C116 84 130 88 137 84V137H100Z" fill="#3c6a34" opacity="0.75"/>
<ellipse cx="104" cy="112" rx="5" ry="6" fill="#d46a86"/>
</g>
</svg></div>
<div class="btn" style="left:2062px;top:1177.51px;width:74px;background:#21c3cc"></div>
<svg style="position:absolute;left:2069.5px;top:1192.71px" width="16" height="16" viewBox="0 0 16 16"><path d="M8 0V16M0 8H16" stroke="#fff" stroke-width="4"/></svg>
<div class="t" style="left:2091px;top:1190.51px;font-size:19.2px;color:#fff;font-weight:normal;">查看</div>
<div class="btn" style="left:2143px;top:1177.51px;width:77px;background:#27be73"></div>
<svg style="position:absolute;left:2150px;top:1190.71px" width="20" height="19" viewBox="0 0 20 19"><path d="M8.6 2.4H2V17.4H16.8V10.6" stroke="#fff" stroke-width="1.5" fill="none"/><path d="M6.2 13.4L6.8 10L15.2 1.6L17.8 4.2L9.4 12.6Z" stroke="#fff" stroke-width="1.5" fill="none" stroke-linejoin="round"/></svg>
<div class="t" style="left:2174.5px;top:1190.51px;font-size:19.2px;color:#fff;font-weight:normal;">修改</div>
<div class="btn" style="left:2227px;top:1177.51px;width:76px;background:#bd5152"></div>
<svg style="position:absolute;left:2234.5px;top:1191.31px" width="17" height="17" viewBox="0 0 17 17"><path d="M1 3.6H16" stroke="#fff" stroke-width="1.6"/><path d="M5.6 3.4V1.2H11.4V3.4" stroke="#fff" stroke-width="1.5" fill="none"/><path d="M2.8 4V15.6H14.2V4" stroke="#fff" stroke-width="1.6" fill="none"/><path d="M6.6 7V12.6M10.4 7V12.6" stroke="#fff" stroke-width="1.4"/></svg>
<div class="t" style="left:2257.5px;top:1190.51px;font-size:19.2px;color:#fff;font-weight:normal;">删除</div>
<div style="position:absolute;left:2471px;top:989px;width:46px;height:46px;border-radius:50%;background:#f7f7f7;box-shadow:0 2px 6px rgba(0,0,0,0.18)"></div>
<div style="position:absolute;left:2475.5px;top:993.5px;width:37px;height:37px;border-radius:50%;background:#dcdcdc;overflow:hidden"><svg width="37" height="37" viewBox="0 0 37 37"><path d="M9 22C8 12 12 5 20 4C26 4 30 8 30 16V24H22V14H14V24Z" fill="#5b4038"/><path d="M14 14H26V26H14Z" fill="#f2c9b5"/><path d="M4 37C6 30 12 28 18 28C24 28 30 30 33 37Z" fill="#1a1a1a"/></svg></div>
</div>
<div style="position:absolute;left:306px;top:159px;width:15px;height:1083px;background:linear-gradient(to right,rgba(0,0,0,0.11),rgba(0,0,0,0.03) 50%,rgba(0,0,0,0))"></div>
<div style="position:absolute;left:3px;top:159px;width:2487px;height:8px;background:linear-gradient(rgba(0,0,0,0.13),rgba(0,0,0,0))"></div>
</body></html>
